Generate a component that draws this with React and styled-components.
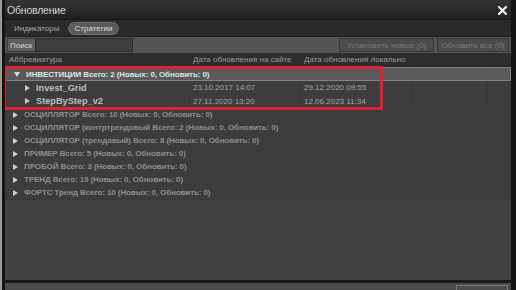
import React from 'react';
import styled, { createGlobalStyle } from 'styled-components';

const GlobalStyle = createGlobalStyle`
  html, body { margin: 0; padding: 0; background: #9a9a9a; overflow: hidden; }
  body { font-family: "Liberation Sans", Arial, sans-serif; }
`;

const Window = styled.div`
  margin-left: 2px;
  width: 506px;
  height: 290px;
  border-left: 3px solid #141414;
  border-right: 5px solid #141414;
  background: #2a2a2a;
  display: flex;
  flex-direction: column;
  overflow: hidden;
  position: relative;
`;

const TitleBar = styled.div`
  height: 20px;
  flex: none;
  display: flex;
  align-items: center;
  justify-content: space-between;
  padding: 0 4px 0 2px;
  background: linear-gradient(#343434, #202020);
  border-bottom: 1px solid #151515;
  box-sizing: border-box;
`;

const Title = styled.span`
  color: #d2d2d2;
  font-size: 10.5px;
  letter-spacing: -0.2px;
`;

const CloseBtn = styled.span`
  display: flex;
  width: 9px;
  height: 9px;
  margin-top: 1px;
`;

const TabsBar = styled.div`
  height: 16px;
  flex: none;
  display: flex;
  align-items: center;
  gap: 3px;
  padding: 0 0 0 3px;
  background: #2a2a2a;
`;

const Tab = styled.div`
  font-size: 8px;
  padding: 1px 5px;
  border-radius: 7px;
  color: ${p => (p.$active ? '#dcdcdc' : '#a8a8a8')};
  background: ${p => (p.$active ? '#5a5a5a' : 'transparent')};
  border: 1px solid ${p => (p.$active ? '#6e6e6e' : 'transparent')};
`;

const SearchBar = styled.div`
  height: 17px;
  flex: none;
  display: flex;
  align-items: stretch;
  padding: 1px 0 1px 2px;
  background: #545454;
  box-sizing: border-box;
  border-top: 1px solid #1e1e1e;
`;

const SearchLabel = styled.div`
  width: 28px;
  background: #5e5e5e;
  color: #d8d8d8;
  font-size: 8px;
  display: flex;
  align-items: center;
  padding-left: 2px;
  box-sizing: border-box;
  border: 1px solid #3a3a3a;
  border-right: none;
`;

const SearchInput = styled.div`
  width: 96px;
  background: #3e3e3e;
  border: 1px solid #2c2c2c;
`;

const Spacer = styled.div`
  flex: 1;
`;

const ActionBtn = styled.div`
  width: ${p => p.$w}px;
  margin-right: ${p => p.$mr || 0}px;
  background: #4b4b4b;
  border: 1px solid #383838;
  color: #7a7a7a;
  font-size: 8px;
  display: flex;
  align-items: center;
  justify-content: center;
  box-sizing: border-box;
`;

const Table = styled.div`
  flex: none;
  position: relative;
  display: flex;
  flex-direction: column;
  background: #414141;
  height: 227px;
`;

const Cols = '185px 111px 112px 75px 1fr';

const HeaderRow = styled.div`
  height: 14px;
  display: grid;
  grid-template-columns: ${Cols};
  background: #2d2d2d;
  border-bottom: 1px solid #222;
  box-sizing: border-box;
`;

const HeaderCell = styled.div`
  color: #9a9a9a;
  font-size: 8px;
  line-height: 13px;
  padding-left: ${p => p.$pl ?? 3}px;
  border-right: 1px solid #303030;
  white-space: nowrap;
  overflow: hidden;
`;

const GroupRow = styled.div`
  height: ${p => (p.$open ? 14 : 13)}px;
  display: flex;
  align-items: center;
  padding-left: 8px;
  box-sizing: border-box;
  background: ${p => (p.$open ? '#5a5a5a' : '#3c3c3c')};
  border: ${p => (p.$open ? '1px solid #858585' : 'none')};
  color: ${p => (p.$open ? '#e2e2e2' : '#8e8e8e')};
  font-size: 8px;
  font-weight: bold;
  letter-spacing: -0.1px;
  white-space: nowrap;
`;

const Arrow = styled.span`
  display: inline-block;
  width: 0;
  height: 0;
  margin-right: 6px;
  ${p =>
    p.$down
      ? `border-left: 3px solid transparent; border-right: 3px solid transparent; border-top: 5px solid #d8d8d8;`
      : `border-top: 3px solid transparent; border-bottom: 3px solid transparent; border-left: 5px solid ${p.$color || '#cfcfcf'};`}
`;

const ItemRow = styled.div`
  height: ${p => p.$h}px;
  display: grid;
  grid-template-columns: ${Cols};
  background: #3d3d3d;
  border-bottom: 1px solid #383838;
  box-sizing: border-box;
`;

const ItemCell = styled.div`
  display: flex;
  align-items: center;
  padding-left: 3px;
  border-right: 1px solid #363636;
  color: #a2a2a2;
  font-size: 8px;
  white-space: nowrap;
  overflow: hidden;
`;

const ItemName = styled(ItemCell)`
  padding-left: 20px;
  color: #bdbdbd;
  font-size: 9.2px;
  font-weight: bold;
`;

const EmptyArea = styled.div`
  flex: 1;
  background: #424242;
  border-top: 1px solid #3a3a3a;
`;

const Highlight = styled.div`
  position: absolute;
  left: -2px;
  top: 13px;
  width: 380px;
  height: 44px;
  border: 3px solid #e1222c;
  box-sizing: border-box;
  pointer-events: none;
`;

const Footer = styled.div`
  flex: none;
  height: 20px;
  background: #4a4a4a;
  border-top: 3px solid #191919;
  display: flex;
  justify-content: flex-end;
  padding: 2px 3px 0 0;
`;

const FooterBtn = styled.div`
  width: 50px;
  height: 18px;
  border: 1px solid #7a7a7a;
  background: #4c4c4c;
`;

const groups = [
  'ОСЦИЛЛЯТОР Всего: 10 (Новых: 0, Обновить: 0)',
  'ОСЦИЛЛЯТОР (контртрендовый Всего: 2 (Новых: 0, Обновить: 0)',
  'ОСЦИЛЛЯТОР (трендовый) Всего: 8 (Новых: 0, Обновить: 0)',
  'ПРИМЕР Всего: 5 (Новых: 0, Обновить: 0)',
  'ПРОБОЙ Всего: 3 (Новых: 0, Обновить: 0)',
  'ТРЕНД Всего: 19 (Новых: 0, Обновить: 0)',
  'ФОРТС Тренд Всего: 10 (Новых: 0, Обновить: 0)',
];

const items = [
  { name: 'Invest_Grid', site: '23.10.2017 14:07', local: '29.12.2020 09:55', h: 14 },
  { name: 'StepByStep_v2', site: '27.11.2020 13:20', local: '12.06.2023 11:34', h: 13 },
];

export default function App() {
  return (
    <>
      <GlobalStyle />
      <Window>
        <TitleBar>
          <Title>Обновление</Title>
          <CloseBtn>
            <svg width="9" height="9" viewBox="0 0 9 9">
              <path d="M1 1L8 8M8 1L1 8" stroke="#f2f2f2" strokeWidth="2.2" strokeLinecap="square" />
            </svg>
          </CloseBtn>
        </TitleBar>
        <TabsBar>
          <Tab>Индикаторы</Tab>
          <Tab $active>Стратегии</Tab>
        </TabsBar>
        <SearchBar>
          <SearchLabel>Поиск</SearchLabel>
          <SearchInput />
          <Spacer />
          <ActionBtn $w={95} $mr={3}>Установить новые (0)</ActionBtn>
          <ActionBtn $w={72} $mr={2}>Обновить все (0)</ActionBtn>
        </SearchBar>
        <Table>
          <HeaderRow>
            <HeaderCell $pl={4}>Аббревиатура</HeaderCell>
            <HeaderCell>Дата обновления на сайте</HeaderCell>
            <HeaderCell>Дата обновления локально</HeaderCell>
            <HeaderCell />
            <HeaderCell />
          </HeaderRow>
          <GroupRow $open>
            <Arrow $down />
            ИНВЕСТИЦИИ Всего: 2 (Новых: 0, Обновить: 0)
          </GroupRow>
          {items.map(it => (
            <ItemRow key={it.name} $h={it.h}>
              <ItemName>
                <Arrow $color="#c8c8c8" />
                {it.name}
              </ItemName>
              <ItemCell>{it.site}</ItemCell>
              <ItemCell>{it.local}</ItemCell>
              <ItemCell />
              <ItemCell />
            </ItemRow>
          ))}
          {groups.map(g => (
            <GroupRow key={g}>
              <Arrow />
              {g}
            </GroupRow>
          ))}
          <EmptyArea />
          <Highlight />
        </Table>
        <Footer>
          <FooterBtn />
        </Footer>
      </Window>
    </>
  );
}
